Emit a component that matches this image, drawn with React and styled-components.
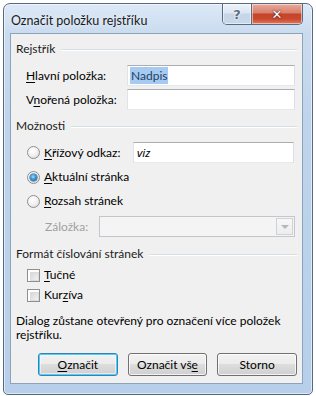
import React from "react";
import styled, { createGlobalStyle, css } from "styled-components";

const Global = createGlobalStyle`
  html, body { margin: 0; padding: 0; background: #ffffff; }
  body { font-family: Lato, "Noto Sans", sans-serif; font-size: 12px; color: #000; }
  * { box-sizing: border-box; }
`;

const Window = styled.div`
  width: 310px;
  height: 392px;
  margin: 3px 0 0 3px;
  border: 1px solid #56697e;
  border-radius: 7px 7px 5px 5px;
  background: linear-gradient(180deg, #dce9f7 0px, #c9dbef 30px, #bed4ec 120px, #b7cfea 100%);
  box-shadow: inset 0 0 0 1px rgba(255,255,255,0.55);
  padding: 0 9px 10px 6px;
  display: flex;
  flex-direction: column;
`;

const TitleBar = styled.div`
  height: 29px;
  display: flex;
  align-items: flex-start;
  justify-content: space-between;
  padding-left: 1px;
`;

const Title = styled.div`
  font-size: 12.5px;
  line-height: 17px;
  margin-top: 8px;
  color: #1a1a1a;
  text-shadow: 0 0 6px rgba(255,255,255,0.9);
`;

const Caption = styled.div`
  display: flex;
  height: 21px;
  border: 1px solid #5a6b7e;
  border-top: none;
  border-radius: 0 0 5px 5px;
  overflow: hidden;
`;

const CapButton = styled.div`
  width: ${p => p.$w}px;
  height: 100%;
  display: flex;
  align-items: center;
  justify-content: center;
  font-family: "DejaVu Sans", sans-serif;
  font-weight: bold;
  box-shadow: inset 0 0 0 1px rgba(255,255,255,0.5);
  ${p => p.$close ? css`
    background: linear-gradient(180deg, #e9a99b 0%, #d9806c 45%, #c5432b 50%, #c9492f 75%, #e07a5f 100%);
    color: #fff;
    font-size: 13px;
    text-shadow: 0 0 1px #4a1a10, 0 0 2px #4a1a10;
  ` : css`
    background: linear-gradient(180deg, #eef3f9 0%, #dbe5f1 45%, #c5d5e8 50%, #c9d9eb 100%);
    color: #5f6f82;
    font-size: 13px;
    border-right: 1px solid #5a6b7e;
    text-shadow: 0 0 2px #fff, 0 0 2px #fff;
  `}
`;

const Client = styled.div`
  flex: 1;
  background: #f0f0f0;
  border: 1px solid #8ea3ba;
  padding: 7px 5px 0 5px;
  display: flex;
  flex-direction: column;
`;

const Group = styled.div`
  display: flex;
  flex-direction: column;
  margin-top: ${p => p.$mt || 0}px;
`;

const GroupHeader = styled.div`
  height: 16px;
  display: flex;
  align-items: center;
  gap: 6px;
  line-height: 16px;
  color: #1c1c1c;
  &::after {
    content: "";
    flex: 1;
    height: 0;
    border-top: 1px solid #d5dfe5;
    border-bottom: 1px solid #ffffff;
    margin-top: 1px;
  }
`;

const Row = styled.div`
  display: flex;
  align-items: center;
  height: ${p => p.$h || 16}px;
  margin-top: ${p => p.$mt || 0}px;
  padding-left: ${p => p.$pl ?? 10}px;
`;

const Label = styled.label`
  width: ${p => p.$w ? `${p.$w}px` : "auto"};
  flex: none;
  color: ${p => p.$disabled ? "#a0a0a0" : "#000"};
  line-height: 16px;
  white-space: nowrap;
`;

const Key = styled.span`
  text-decoration: underline;
  text-underline-offset: 2px;
`;

const TextBox = styled.div`
  width: ${p => p.$w}px;
  height: 21px;
  background: #fff;
  border: 1px solid;
  border-color: #abadb3 #dbdfe6 #e3e9ef #e2e3ea;
  display: flex;
  align-items: center;
  padding-left: 2px;
  white-space: nowrap;
  overflow: hidden;
  ${p => p.$italic && css`
    font-family: "Noto Sans", "DejaVu Sans", sans-serif;
    font-style: italic;
    font-size: 11.5px;
    padding-left: 3px;
  `}
`;

const Selection = styled.span`
  background: #a6caf0;
  color: #1f3f66;
  padding: 0 1px;
  line-height: 17px;
`;

const Radio = styled.span`
  width: 13px;
  height: 13px;
  border-radius: 50%;
  border: 1px solid #8e8f8f;
  background: radial-gradient(circle at 40% 35%, #ffffff 0%, #f4f4f4 40%, #d6d6d6 100%);
  flex: none;
  margin: 0 4px 0 1px;
  display: flex;
  align-items: center;
  justify-content: center;
  &::after {
    content: "";
    display: ${p => p.$checked ? "block" : "none"};
    width: 7px;
    height: 7px;
    border-radius: 50%;
    background: radial-gradient(circle at 45% 40%, #9be0fb 0%, #3b93d1 45%, #15508f 100%);
    box-shadow: 0 0 0 0.5px #1b4f80;
  }
`;

const Check = styled.span`
  width: 13px;
  height: 13px;
  border: 1px solid #8e8f8f;
  background: #fff;
  flex: none;
  margin: 0 4px 0 1px;
  padding: 2px;
  &::after {
    content: "";
    display: block;
    width: 100%;
    height: 100%;
    border: 1px solid #dcdcdc;
    background: linear-gradient(135deg, #d8d8d8 0%, #f2f2f2 100%);
  }
`;

const Combo = styled.div`
  width: ${p => p.$w}px;
  height: 21px;
  border: 1px solid #c3c6ca;
  background: #f4f4f4;
  display: flex;
  justify-content: flex-end;
  padding: 1px;
`;

const ComboArrow = styled.div`
  width: 17px;
  height: 100%;
  border: 1px solid #d0d3d6;
  background: linear-gradient(180deg, #f7f7f7, #ededed);
  display: flex;
  align-items: center;
  justify-content: center;
  &::after {
    content: "";
    border-left: 4px solid transparent;
    border-right: 4px solid transparent;
    border-top: 4px solid #b5b8bb;
    margin-top: 1px;
  }
`;

const Note = styled.div`
  margin-top: ${p => p.$mt}px;
  line-height: 14px;
  padding-right: 10px;
`;

const ButtonRow = styled.div`
  display: flex;
  gap: 10px;
  margin-top: 11px;
  padding-left: 22px;
`;

const Button = styled.div`
  width: 80px;
  height: 23px;
  border: 1px solid ${p => p.$default ? "#3c7fb1" : "#707070"};
  border-radius: 3px;
  background: linear-gradient(180deg, #f2f2f2 0%, #ebebeb 49%, #dddddd 50%, #cfcfcf 100%);
  box-shadow: ${p => p.$default ? "inset 0 0 0 1px #48d2fb, inset 0 0 0 2px rgba(255,255,255,0.5)" : "inset 0 0 0 1px rgba(255,255,255,0.75)"};
  display: flex;
  align-items: center;
  justify-content: center;
  line-height: 16px;
`;

export default function App() {
  return (
    <>
      <Global />
      <Window>
        <TitleBar>
          <Title>Označit položku rejstříku</Title>
          <Caption>
            <CapButton $w={29}>?</CapButton>
            <CapButton $w={50} $close>✕</CapButton>
          </Caption>
        </TitleBar>
        <Client>
          <Group>
            <GroupHeader>Rejstřík</GroupHeader>
            <Row $h={21} $mt={8}>
              <Label $w={101}><Key>H</Key>lavní položka:</Label>
              <TextBox $w={168}><Selection>Nadpis</Selection></TextBox>
            </Row>
            <Row $h={21} $mt={3}>
              <Label $w={101}>V<Key>n</Key>ořená položka:</Label>
              <TextBox $w={168} />
            </Row>
          </Group>
          <Group $mt={8}>
            <GroupHeader>Možnosti</GroupHeader>
            <Row $h={21} $mt={8}>
              <Radio />
              <Label $w={89}><Key>K</Key>řížový odkaz:</Label>
              <TextBox $w={161} $italic>viz</TextBox>
            </Row>
            <Row $mt={6}>
              <Radio $checked />
              <Label><Key>A</Key>ktuální stránka</Label>
            </Row>
            <Row $mt={8}>
              <Radio />
              <Label><Key>R</Key>ozsah stránek</Label>
            </Row>
            <Row $h={21} $mt={7} $pl={29}>
              <Label $w={54} $disabled>Záložka:</Label>
              <Combo $w={196}><ComboArrow /></Combo>
            </Row>
          </Group>
          <Group $mt={9}>
            <GroupHeader>Formát číslování stránek</GroupHeader>
            <Row $mt={5}>
              <Check />
              <Label><Key>T</Key>učné</Label>
            </Row>
            <Row $mt={4}>
              <Check />
              <Label>Kur<Key>z</Key>íva</Label>
            </Row>
          </Group>
          <Note $mt={11}>Dialog zůstane otevřený pro označení více položek rejstříku.</Note>
          <ButtonRow>
            <Button $default><Key>O</Key>značit</Button>
            <Button>Označit vš<Key>e</Key></Button>
            <Button>Storno</Button>
          </ButtonRow>
        </Client>
      </Window>
    </>
  );
}
